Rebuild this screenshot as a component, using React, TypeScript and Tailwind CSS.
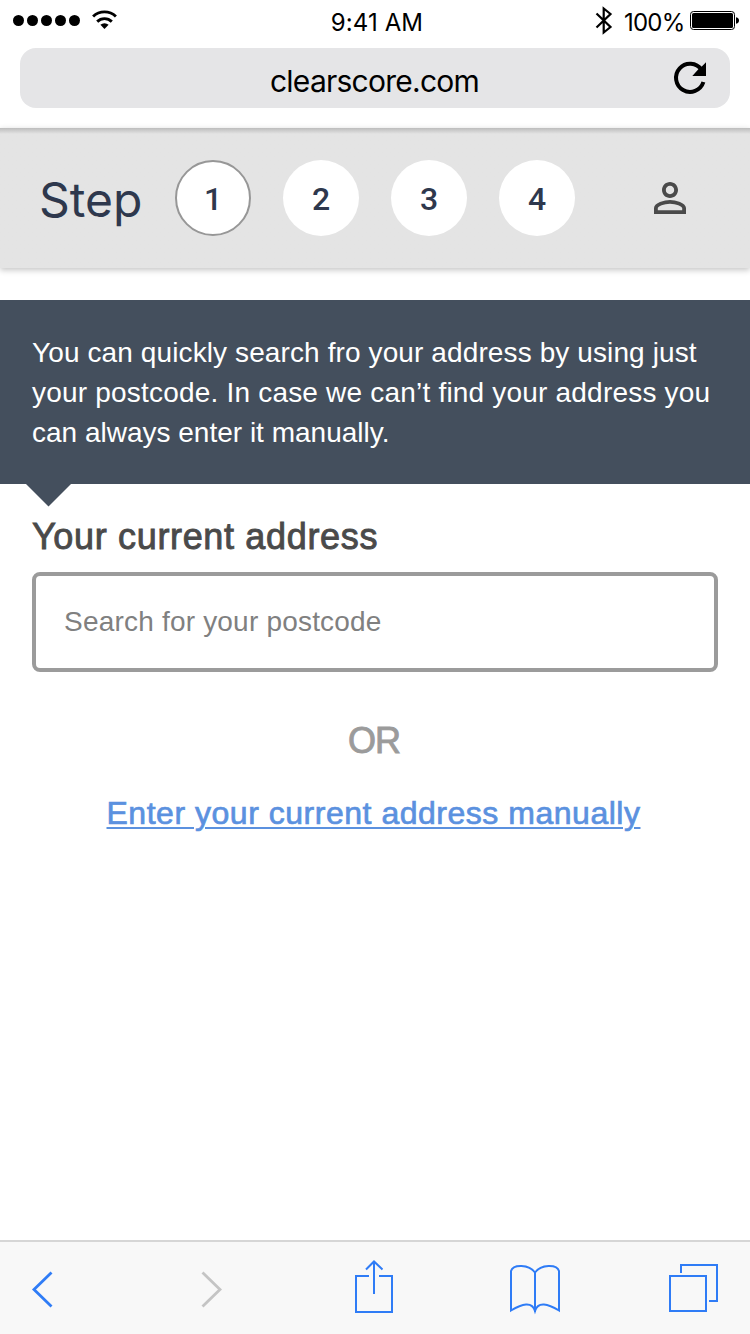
import React from "react";

const steps = [1, 2, 3, 4];

function StatusBar() {
  return (
    <div className="flex h-12 shrink-0 items-start font-['Inter',sans-serif] text-black">
      <svg className="h-10 w-[250px]" viewBox="0 0 250 40">
        {[18.5, 32.5, 46.5, 60.5, 74.5].map((cx) => (
          <circle key={cx} cx={cx} cy="20.5" r="5.5" />
        ))}
        <g fill="none" stroke="#000" strokeWidth="2.9">
          <path d="M93.1 16.5A16.4 16.4 0 0 1 115.9 16.5" />
          <path d="M97.2 21.6A10.4 10.4 0 0 1 111.8 21.6" />
        </g>
        <path d="M100.4 24.8A6 6 0 0 1 108.6 24.8L104.5 29Z" />
      </svg>
      <div className="w-[254px] pt-2 text-center text-[24px] leading-[30px] tracking-[0.1px]">9:41 AM</div>
      <div className="flex grow items-start">
        <svg className="h-10 w-[120px] shrink-0" viewBox="504 0 120 40">
          <path d="M596.5 13.5L610.5 27L603.7 32.5V8.5L610.5 14L596.5 27.5" fill="none" stroke="#000" strokeWidth="2.2" />
        </svg>
        <div className="w-[66px] pt-2 text-[24px] leading-[30px] tracking-[-0.8px] whitespace-nowrap">100%</div>
        <svg className="h-10 w-[60px] shrink-0" viewBox="690 0 60 40">
          <rect x="690.5" y="11.5" width="44" height="18" rx="3" fill="none" stroke="#000" />
          <rect x="692" y="13" width="41" height="15" rx="1.5" />
          <path d="M736 17.2C738.4 17.6 739 19 739 20.5S738.4 23.4 736 23.8Z" />
        </svg>
      </div>
    </div>
  );
}

function AddressBar() {
  return (
    <div className="mx-5 grid h-[60px] shrink-0 grid-cols-[60px_1fr_60px] items-center rounded-2xl bg-[#e5e5e7]">
      <span />
      <span className="pt-1.5 pr-px text-center font-['Inter',sans-serif] text-[30px] leading-9 tracking-[-0.75px] text-black">
        clearscore.com
      </span>
      <svg className="h-[60px] w-[60px]" viewBox="670 48 60 60">
        <path d="M703.4 82A14 14 0 1 1 701.5 69.8" fill="none" stroke="#000" strokeWidth="4" />
        <path d="M706 62.3V76H692.3L699.5 68L701.5 66.8Z" />
      </svg>
    </div>
  );
}

function StepHeader() {
  return (
    <header className="mt-5 flex h-[140px] shrink-0 items-center bg-[#e4e4e4] bg-linear-to-b from-[#bcbcbc] from-0% to-[#e4e4e4] to-[6px] pl-10 shadow-[0_2px_6px_rgba(0,0,0,0.24)]">
      <div className="w-[135px] pt-[3px] font-['Inter',sans-serif] text-[48px] leading-[58px] text-[#2e384d]">
        <span className="-ml-px">Step</span>
      </div>
      <div className="flex gap-8">
        {steps.map((n) => (
          <div
            key={n}
            className={
              n === 1
                ? "flex size-[76px] items-center justify-center rounded-full border-2 border-[#979797] bg-white font-['Roboto',sans-serif] text-[32px] leading-10 font-medium text-[#2e384d]"
                : "flex size-[76px] items-center justify-center rounded-full bg-white font-['Roboto',sans-serif] text-[32px] leading-10 font-medium text-[#2e384d]"
            }
          >
            <span className="pt-0.5">{n}</span>
          </div>
        ))}
      </div>
      <svg className="ml-[71px] size-12" viewBox="0 0 24 24" fill="#4a4a4a">
        <path d="M12 5.9c1.16 0 2.1.94 2.1 2.1s-.94 2.1-2.1 2.1S9.9 9.16 9.9 8s.94-2.1 2.1-2.1m0 9c2.97 0 6.1 1.46 6.1 2.1v1.1H5.9V17c0-.64 3.13-2.1 6.1-2.1M12 4C9.79 4 8 5.79 8 8s1.79 4 4 4 4-1.79 4-4-1.79-4-4-4zm0 9c-2.67 0-8 1.34-8 4v3h16v-3c0-2.66-5.33-4-8-4z" />
      </svg>
    </header>
  );
}

function BottomBar() {
  return (
    <nav className="mt-auto flex h-[94px] shrink-0 border-t-2 border-[#d6d6d6] bg-[#f8f8f8]">
      <svg className="h-[92px] w-[125px]" viewBox="0 1242 125 92">
        <path d="M51.5 1272.5L34 1289.5L51.5 1306.5" fill="none" stroke="#2f7cf6" strokeWidth="2.8" />
      </svg>
      <svg className="h-[92px] w-[125px]" viewBox="125 1242 125 92">
        <path d="M202.5 1272.5L220 1289.5L202.5 1306.5" fill="none" stroke="#c4c4c4" strokeWidth="2.8" />
      </svg>
      <svg className="h-[92px] w-[200px]" viewBox="250 1242 200 92" fill="none" stroke="#2f7cf6" strokeWidth="2">
        <path d="M369 1276H356V1312H392V1276H379M374 1294V1261.5M366 1269.5L374 1261.5L382.5 1269.5" />
      </svg>
      <svg className="h-[92px] w-[150px]" viewBox="450 1242 150 92" fill="none" stroke="#2f7cf6" strokeWidth="2">
        <path d="M535 1312V1272.5C529 1264 513 1264 511 1271V1310.5C522 1304 532 1301 535 1311C538 1301 548 1304 559 1310.5V1271C557 1264 541 1264 535 1272.5" />
      </svg>
      <svg className="h-[92px] w-[150px]" viewBox="600 1242 150 92" fill="none" stroke="#2f7cf6" strokeWidth="2">
        <path d="M670 1276H706V1311H670ZM681 1273V1265H717V1301H709" />
      </svg>
    </nav>
  );
}

export default function App() {
  return (
    <div className="flex h-[1334px] w-[750px] flex-col overflow-hidden bg-white font-['Liberation_Sans',Arial,sans-serif]">
      <StatusBar />
      <AddressBar />
      <StepHeader />
      <section className="relative mt-8 h-[184px] shrink-0 bg-[#444f5d] pt-[33px] pl-8 text-[28px] leading-10 whitespace-nowrap text-white">
        <p className="tracking-[0.11px]">You can quickly search fro your address by using just</p>
        <p className="tracking-[0.2px]">your postcode. In case we can’t find your address you</p>
        <p>can always enter it manually.</p>
        <svg className="absolute top-[184px] left-[26px] h-[23px] w-[45px]" viewBox="0 0 45 23">
          <path d="M0 0H45L22.5 22.5Z" fill="#444f5d" />
        </svg>
      </section>
      <main className="flex flex-col px-8 pt-8">
        <label
          htmlFor="postcode"
          className="h-14 text-[36px] leading-[42px] tracking-[0.66px] text-[#4a4a4a] [-webkit-text-stroke:0.9px_#4a4a4a]"
        >
          Your current address
        </label>
        <input
          id="postcode"
          placeholder="Search for your postcode"
          className="h-[100px] w-[686px] rounded-lg border-4 border-[#9b9b9b] px-7 text-[28px] tracking-[0.2px] placeholder:text-[#808080]"
        />
        <div className="mt-12 pr-0.5 text-center text-[36px] leading-[42px] tracking-[-1px] text-[#9b9b9b] [-webkit-text-stroke:0.9px_#9b9b9b]">OR</div>
        <a
          href="#manual"
          className="mt-8 mr-[3px] self-center text-[32px] leading-[38px] tracking-[0.52px] whitespace-nowrap text-[#5b91df] underline decoration-2 underline-offset-[3px] [-webkit-text-stroke:0.7px_#5b91df]"
        >
          Enter your current address manually
        </a>
      </main>
      <BottomBar />
    </div>
  );
}
